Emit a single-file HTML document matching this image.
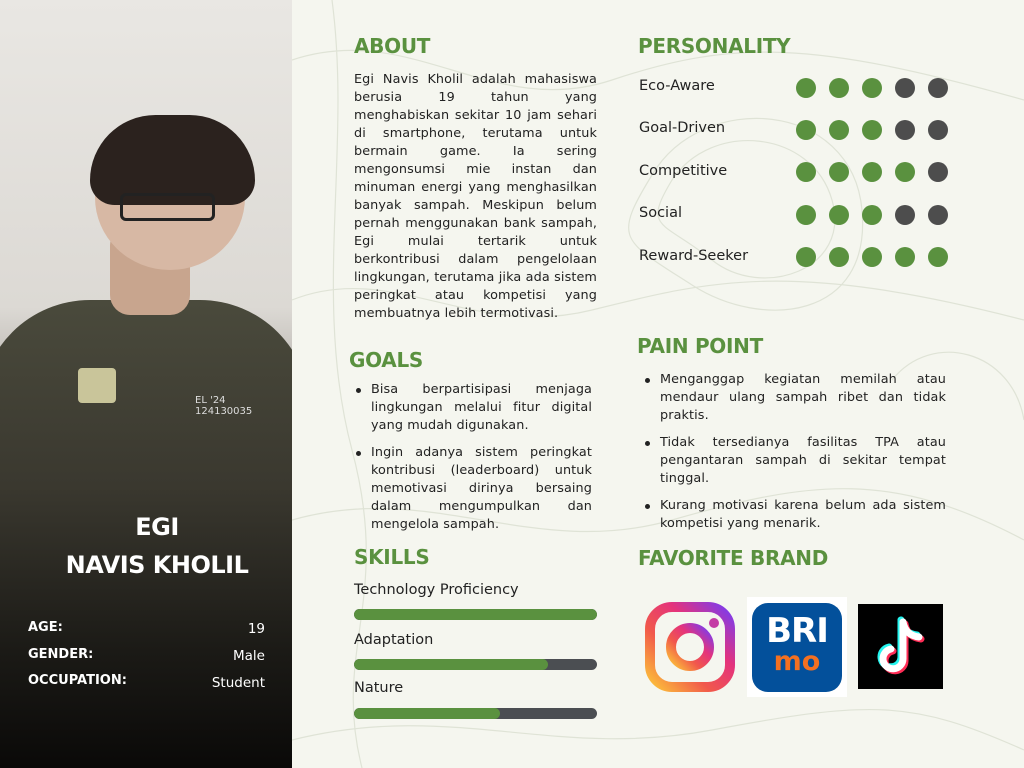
<!DOCTYPE html>
<html><head><meta charset="utf-8"><style>
*{margin:0;padding:0;box-sizing:border-box}
html,body{width:1024px;height:768px;overflow:hidden}
body{background:#f5f6ef;font-family:"DejaVu Sans","Liberation Sans",sans-serif;position:relative;color:#222}
.abs{position:absolute}
h2{position:absolute;font-size:20px;font-weight:bold;color:#5a913f;letter-spacing:-0.3px}
.txt{position:absolute;font-size:12.8px;letter-spacing:0.1px;line-height:18px;text-align:justify;color:#222}
ul{list-style:none}
li{position:relative;padding-left:17px;margin-bottom:9px;text-align:justify}
li:before{content:"";position:absolute;left:2px;top:7px;width:5px;height:5px;border-radius:50%;background:#222}
.lab{position:absolute;left:639px;font-size:14.5px;color:#222}
.dots{position:absolute;left:796px;display:flex;gap:13px}
.dots i{width:20px;height:20px;border-radius:50%;background:#5a913f;display:block}
.dots i.g{background:#4d4d4d}
.sk{position:absolute;left:354px;font-size:14.5px}
.bar{position:absolute;left:354px;width:243px;height:11px;border-radius:6px;background:#4b4e52;overflow:hidden}
.bar b{display:block;height:100%;background:#5a913f;border-radius:6px}
</style></head><body>
<svg class="abs" style="left:292px;top:0" width="732" height="768" fill="none" stroke="#dfe3d6" stroke-width="1.2">
<path d="M0 60 C120 20 200 120 320 80 S520 40 732 100"/>
<path d="M0 300 C100 260 180 340 300 310 S500 260 732 320"/>
<path d="M380 180 C420 120 520 130 540 200 S470 300 420 260 S350 230 380 180"/>
<path d="M360 175 C410 90 560 100 570 210 S470 330 400 285 S320 240 360 175"/>
<path d="M0 520 C140 480 240 560 380 520 S600 470 732 540"/>
<path d="M0 740 C160 700 260 760 420 730 S620 700 732 750"/>
<path d="M600 380 C640 330 720 350 732 420"/>
<path d="M40 0 C60 150 20 300 60 450 S40 650 70 768"/>
</svg>
<div class="abs" style="left:0;top:0;width:292px;height:768px;background:linear-gradient(180deg,#e9e7e3 0%,#dcd9d4 40%,#8e8a84 62%,#2a2622 82%,#0a0908 100%);overflow:hidden">
<div class="abs" style="left:-20px;top:300px;width:330px;height:468px;border-radius:110px 110px 0 0;background:linear-gradient(180deg,#4a4a3c 0%,#3a382f 40%,#1b1a16 75%,#0a0908 100%)"></div>
<div class="abs" style="left:110px;top:225px;width:80px;height:90px;background:#c8a58e;border-radius:20px"></div>
<div class="abs" style="left:95px;top:125px;width:150px;height:145px;border-radius:50%;background:#d7b8a4"></div>
<div class="abs" style="left:90px;top:115px;width:165px;height:90px;border-radius:80px 80px 30px 30px;background:#2b221e"></div>
<div class="abs" style="left:120px;top:193px;width:95px;height:28px;border:3px solid #222;border-radius:6px"></div>
<div class="abs" style="left:78px;top:368px;width:38px;height:35px;background:#c9c59a;border-radius:4px"></div>
<div class="abs" style="left:195px;top:395px;color:#ddd;font-size:10px;line-height:11px">EL '24<br>124130035</div>
<div class="abs" style="left:0;top:508px;width:314px;text-align:center;color:#fff;font-weight:bold;font-size:24px;line-height:38px;letter-spacing:-0.5px">EGI<br>NAVIS KHOLIL</div>
<div class="abs" style="left:28px;top:615px;color:#fff;font-weight:bold;font-size:13px;line-height:26.5px">AGE:<br>GENDER:<br>OCCUPATION:</div>
<div class="abs" style="right:27px;top:616px;color:#fff;font-size:13.5px;line-height:27px;text-align:right">19<br>Male<br>Student</div>
</div>

<h2 style="left:354px;top:34px">ABOUT</h2>
<div class="txt" style="left:354px;top:71px;width:243px">Egi Navis Kholil adalah mahasiswa berusia 19 tahun yang menghabiskan sekitar 10 jam sehari di smartphone, terutama untuk bermain game. Ia sering mengonsumsi mie instan dan minuman energi yang menghasilkan banyak sampah. Meskipun belum pernah menggunakan bank sampah, Egi mulai tertarik untuk berkontribusi dalam pengelolaan lingkungan, terutama jika ada sistem peringkat atau kompetisi yang membuatnya lebih termotivasi.</div>

<h2 style="left:349px;top:348px">GOALS</h2>
<ul class="txt" style="left:354px;top:381px;width:238px">
<li>Bisa berpartisipasi menjaga lingkungan melalui fitur digital yang mudah digunakan.</li>
<li>Ingin adanya sistem peringkat kontribusi (leaderboard) untuk memotivasi dirinya bersaing dalam mengumpulkan dan mengelola sampah.</li>
</ul>

<h2 style="left:354px;top:545px">SKILLS</h2>
<div class="sk" style="top:582px">Technology Proficiency</div>
<div class="bar" style="top:609px"><b style="width:100%"></b></div>
<div class="sk" style="top:632px">Adaptation</div>
<div class="bar" style="top:659px"><b style="width:80%"></b></div>
<div class="sk" style="top:680px">Nature</div>
<div class="bar" style="top:708px"><b style="width:60%"></b></div>

<h2 style="left:638px;top:34px">PERSONALITY</h2>
<div class="lab" style="top:78px">Eco-Aware</div><div class="dots" style="top:78px"><i></i><i></i><i></i><i class="g"></i><i class="g"></i></div>
<div class="lab" style="top:120px">Goal-Driven</div><div class="dots" style="top:120px"><i></i><i></i><i></i><i class="g"></i><i class="g"></i></div>
<div class="lab" style="top:163px">Competitive</div><div class="dots" style="top:162px"><i></i><i></i><i></i><i></i><i class="g"></i></div>
<div class="lab" style="top:205px">Social</div><div class="dots" style="top:205px"><i></i><i></i><i></i><i class="g"></i><i class="g"></i></div>
<div class="lab" style="top:248px">Reward-Seeker</div><div class="dots" style="top:247px"><i></i><i></i><i></i><i></i><i></i></div>

<h2 style="left:637px;top:334px">PAIN POINT</h2>
<ul class="txt" style="left:643px;top:371px;width:303px">
<li>Menganggap kegiatan memilah atau mendaur ulang sampah ribet dan tidak praktis.</li>
<li>Tidak tersedianya fasilitas TPA atau pengantaran sampah di sekitar tempat tinggal.</li>
<li>Kurang motivasi karena belum ada sistem kompetisi yang menarik.</li>
</ul>

<h2 style="left:638px;top:546px">FAVORITE BRAND</h2>
<svg class="abs" style="left:644px;top:601px" width="92" height="92" viewBox="0 0 92 92">
<defs><linearGradient id="ig" x1="0" y1="1" x2="1" y2="0"><stop offset="0" stop-color="#fcc33a"/><stop offset=".35" stop-color="#f1594b"/><stop offset=".65" stop-color="#e4337c"/><stop offset="1" stop-color="#7a3cf0"/></linearGradient></defs>
<rect x="6" y="6" width="80" height="80" rx="22" fill="none" stroke="url(#ig)" stroke-width="10"/>
<circle cx="46" cy="46" r="19" fill="none" stroke="url(#ig)" stroke-width="10"/>
<circle cx="70" cy="22" r="5" fill="#c43ba5"/>
</svg>
<div class="abs" style="left:747px;top:597px;width:100px;height:100px;background:#fff"></div>
<div class="abs" style="left:752px;top:603px;width:90px;height:89px;background:#03509b;border-radius:16px;text-align:center;color:#fff;font-weight:bold">
<div style="font-size:34px;line-height:36px;margin-top:10px;letter-spacing:-1px">BRI</div>
<div style="font-size:27px;line-height:26px;color:#f37021">mo</div></div>
<div class="abs" style="left:858px;top:604px;width:85px;height:85px;background:#000"></div>
<svg class="abs" style="left:858px;top:604px" width="85" height="85" viewBox="0 0 85 85" fill="none" stroke-width="7" stroke-linecap="round">
<path d="M45 18 V55 A10 10 0 1 1 33 45" stroke="#25f4ee" transform="translate(-2,-2)"/>
<path d="M45 18 C47 28 53 32 61 33" stroke="#25f4ee" transform="translate(-2,-2)"/>
<path d="M45 18 V55 A10 10 0 1 1 33 45" stroke="#fe2c55" transform="translate(2,2)"/>
<path d="M45 18 C47 28 53 32 61 33" stroke="#fe2c55" transform="translate(2,2)"/>
<path d="M45 18 V55 A10 10 0 1 1 33 45" stroke="#fff"/>
<path d="M45 18 C47 28 53 32 61 33" stroke="#fff"/>
</svg>
</body></html>
